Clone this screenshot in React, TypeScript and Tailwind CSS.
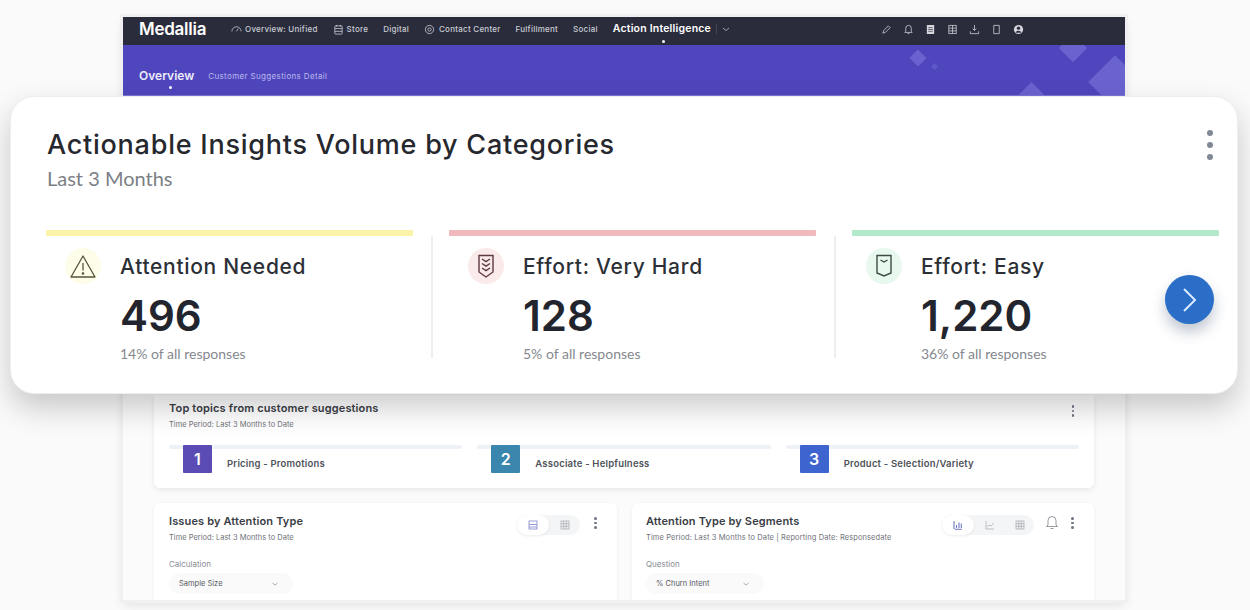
import React from "react";

const headFont = "font-['Inter','Liberation_Sans',sans-serif]";
const bodyFont = "font-['Lato','Open_Sans',sans-serif]";

function Dots({ className = "" }: { className?: string }) {
  return (
    <div className={`flex flex-col items-center gap-[2px] ${className}`}>
      <span className="w-[2.5px] h-[2.5px] rounded-full bg-[#6b7280]" />
      <span className="w-[2.5px] h-[2.5px] rounded-full bg-[#6b7280]" />
      <span className="w-[2.5px] h-[2.5px] rounded-full bg-[#6b7280]" />
    </div>
  );
}

const I = ({ children, size = 11, color = "#c5c8cf" }: { children: React.ReactNode; size?: number; color?: string }) => (
  <svg width={size} height={size} viewBox="0 0 12 12" fill="none" stroke={color} strokeWidth="0.9" className="shrink-0">
    {children}
  </svg>
);

function NavItem({ icon, label, className = "" }: { icon?: React.ReactNode; label: string; className?: string }) {
  return (
    <div className={`flex items-center gap-[3px] text-[8px] tracking-[0.25px] font-medium text-[#c9ccd3] whitespace-nowrap ${className}`}>
      {icon}
      <span>{label}</span>
    </div>
  );
}

function Nav() {
  return (
    <div className="h-[28px] bg-[#2a2c3c] flex items-center pl-[16px] pr-[101px] pb-[4px] shrink-0">
      <div className={`text-[17px] leading-none font-semibold text-white w-[92px] tracking-[-0.25px] ${headFont}`}>Medallia</div>
      <div className={`flex items-center ${headFont}`}>
        <NavItem icon={<I><path d="M1 8a5 5 0 0 1 10 0M6 8l2-3" /></I>} label="Overview: Unified" />
        <NavItem className="ml-[15px]" icon={<I><rect x="2" y="2" width="8" height="9" rx="1" /><path d="M2 5h8M2 8h8M4 1v2M8 1v2" /></I>} label="Store" />
        <NavItem className="ml-[15px] tracking-[0.5px]" label="Digital" />
        <NavItem className="ml-[15px] gap-[4px]" icon={<I><circle cx="6" cy="6" r="4.5" /><circle cx="6" cy="6" r="1.8" /></I>} label="Contact Center" />
        <NavItem className="ml-[15px]" label="Fulfillment" />
        <NavItem className="ml-[15px]" label="Social" />
        <div className="relative ml-[15px] text-[10.5px] font-semibold tracking-[0.2px] text-white whitespace-nowrap">
          Action Intelligence
          <span className="absolute left-1/2 -bottom-[6px] w-[3px] h-[3px] rounded-full bg-white" />
        </div>
        <span className="ml-[5px] w-px h-[10px] bg-[#44475a]" />
        <svg width="8" height="8" viewBox="0 0 8 8" fill="none" stroke="#9ea2ad" className="ml-[5px]"><path d="M1 3l3 2.5L7 3" /></svg>
      </div>
      <div className="ml-auto flex items-center gap-[11px]">
        <I><path d="M2 10l1-3 5-5 2 2-5 5-3 1z" /></I>
        <I><path d="M6 1.5a3 3 0 0 1 3 3V8l1 1.2H2L3 8V4.5a3 3 0 0 1 3-3zM5 10.5h2" /></I>
        <svg width="11" height="11" viewBox="0 0 12 12" fill="#d5d7dc"><rect x="2" y="1" width="8" height="10" rx="0.5" /><path d="M3.5 4h5M3.5 6h5M3.5 8h5" stroke="#2a2c3c" strokeWidth="0.7" /></svg>
        <I><rect x="2" y="1.5" width="8" height="9" /><path d="M2 4.5h8M2 7.5h8M6 1.5v9" /></I>
        <I><path d="M6 1v6M4 5l2 2 2-2M1.5 8v2.5h9V8" /></I>
        <I><path d="M3 1.5h6v9H3z" /></I>
        <svg width="11" height="11" viewBox="0 0 12 12"><circle cx="6" cy="6" r="5" fill="#d5d7dc" /><circle cx="6" cy="4.6" r="1.8" fill="#2a2c3c" /><path d="M2.8 9.5a3.4 3.4 0 0 1 6.4 0" fill="#2a2c3c" /></svg>
      </div>
    </div>
  );
}

function Banner() {
  return (
    <div className="relative h-[51px] bg-[#4f46bd] overflow-hidden shrink-0 border-b border-[#7a74d6]">
      <div className={`flex items-center gap-[14px] pl-[16px] pt-[25px] ${headFont}`}>
        <div className="relative text-[12px] font-semibold text-[#eceaf9] leading-none">
          Overview
          <span className="absolute left-[30px] top-[16px] w-[3px] h-[3px] rounded-full bg-white" />
        </div>
        <div className="text-[8px] tracking-[0.35px] text-[#bcb8ee] leading-none">Customer Suggestions Detail</div>
      </div>
      <span className="absolute left-[789px] top-[7px] w-[12px] h-[12px] rotate-45 bg-[#6a62cf]" />
      <span className="absolute left-[809px] top-[19px] w-[5px] h-[5px] rotate-45 bg-[#5f58c9]" />
      <span className="absolute left-[940px] top-[-7px] w-[20px] h-[20px] rotate-45 bg-[#6a62cf]" />
      <span className="absolute left-[973px] top-[18px] w-[38px] h-[38px] rotate-45 bg-[#6a62cf]" />
      <span className="absolute left-[899px] top-[41px] w-[19px] h-[19px] rotate-45 bg-[#6a62cf]" />
    </div>
  );
}

function Topic({ n, color, label }: { n: string; color: string; label: string }) {
  return (
    <div className="relative h-[28px]">
      <div className="h-[4px] rounded-full bg-[#eef1f7]" />
      <div className="absolute left-[14px] top-0 flex items-center">
        <div className={`w-[29px] h-[28px] flex items-center justify-center text-white font-semibold text-[16px] rounded-[1px] ${color}`}>{n}</div>
        <div className="ml-[15px] mt-[10px] text-[9.5px] font-semibold tracking-[0.2px] text-[#4f5259] whitespace-nowrap">{label}</div>
      </div>
    </div>
  );
}

function Select({ label, value, w }: { label: string; value: string; w: string }) {
  return (
    <div className="mt-[18px]">
      <div className="text-[8px] text-[#8a8d94] leading-none">{label}</div>
      <div className={`mt-[5px] h-[21px] rounded-full bg-[#fafafa] flex items-center justify-between pl-[10px] pr-[14px] ${w}`}>
        <span className="text-[7.5px] text-[#55585f]">{value}</span>
        <svg width="8" height="8" viewBox="0 0 8 8" fill="none" stroke="#a9acb3"><path d="M1.5 3l2.5 2 2.5-2" /></svg>
      </div>
    </div>
  );
}

function Body() {
  return (
    <div className={`flex-1 min-h-0 overflow-hidden bg-[#fbfbfb] px-[31px] pt-[299px] ${headFont}`}>
      <div className="h-[93px] bg-white rounded-b-[6px] shadow-[0_2px_6px_rgba(0,0,0,0.08)] px-[15px] pt-[7px] relative">
        <div className="text-[11px] font-semibold tracking-[0.14px] text-[#3a3d45] leading-[13px]">Top topics from customer suggestions</div>
        <div className="mt-[5px] text-[7.5px] text-[#70737a] leading-[9px]">Time Period: Last 3 Months to Date</div>
        <Dots className="absolute right-[20px] top-[10px]" />
        <div className="grid grid-cols-3 gap-[15px] mt-[16px]">
          <Topic n="1" color="bg-[#5a4bb5]" label="Pricing - Promotions" />
          <Topic n="2" color="bg-[#3a86ad]" label="Associate - Helpfulness" />
          <Topic n="3" color="bg-[#3e64d0]" label="Product - Selection/Variety" />
        </div>
      </div>
      <div className="grid grid-cols-[463px_462px] gap-[15px] mt-[15px]">
        <div className="relative h-[110px] bg-white rounded-[6px] shadow-[0_1px_4px_rgba(0,0,0,0.05)] pl-[15px] pt-[12px]">
          <div className="text-[11px] font-semibold tracking-[0.14px] text-[#3a3d45] leading-[13px]">Issues by Attention Type</div>
          <div className="mt-[5px] text-[7.5px] text-[#70737a] leading-[9px]">Time Period: Last 3 Months to Date</div>
          <Select label="Calculation" value="Sample Size" w="w-[124px]" />
          <div className="absolute left-[363px] top-[12px] flex items-center h-[20px] w-[63px] rounded-full bg-[#f4f5f6]">
            <div className="w-[32px] h-[20px] rounded-full bg-white shadow-[0_1px_3px_rgba(0,0,0,0.08)] flex items-center justify-center">
              <svg width="10" height="10" viewBox="0 0 10 10" fill="none" stroke="#7d86c9" strokeWidth="0.8"><rect x="1" y="1" width="8" height="8" /><path d="M1 4.5h8M1 7h8" /></svg>
            </div>
            <div className="w-[31px] flex justify-center">
              <svg width="10" height="10" viewBox="0 0 10 10" fill="none" stroke="#a4a7ae" strokeWidth="0.7"><rect x="1" y="1" width="8" height="8" /><path d="M1 3.7h8M1 6.3h8M3.7 1v8M6.3 1v8" /></svg>
            </div>
          </div>
          <Dots className="absolute left-[440px] top-[14px]" />
        </div>
        <div className="relative h-[110px] bg-white rounded-[6px] shadow-[0_1px_4px_rgba(0,0,0,0.05)] pl-[14px] pt-[12px]">
          <div className="text-[11px] font-semibold tracking-[0.14px] text-[#3a3d45] leading-[13px]">Attention Type by Segments</div>
          <div className="mt-[5px] text-[7.5px] tracking-[0.1px] text-[#70737a] leading-[9px]">Time Period: Last 3 Months to Date | Reporting Date: Responsedate</div>
          <Select label="Question" value="% Churn Intent" w="w-[118px]" />
          <div className="absolute left-[310px] top-[12px] flex items-center h-[20px] w-[92px] rounded-full bg-[#f4f5f6]">
            <div className="w-[32px] h-[20px] rounded-full bg-white shadow-[0_1px_3px_rgba(0,0,0,0.08)] flex items-center justify-center">
              <svg width="10" height="10" viewBox="0 0 10 10" fill="none" stroke="#6f78c4" strokeWidth="1.1"><path d="M1 9V1M1.8 9.3H9M3.5 8V5M6 8V2.5M8.3 8V3.5" /></svg>
            </div>
            <div className="w-[31px] flex justify-center">
              <svg width="10" height="10" viewBox="0 0 10 10" fill="none" stroke="#a4a7ae" strokeWidth="0.7"><path d="M1 1v8h8M2 7l2-2 2 1 3-3" /></svg>
            </div>
            <div className="w-[29px] flex justify-center">
              <svg width="10" height="10" viewBox="0 0 10 10" fill="none" stroke="#a4a7ae" strokeWidth="0.7"><rect x="1" y="1" width="8" height="8" /><path d="M1 3.7h8M1 6.3h8M3.7 1v8M6.3 1v8" /></svg>
            </div>
          </div>
          <svg width="14" height="15" viewBox="0 0 14 15" fill="none" stroke="#7c8087" strokeWidth="0.8" className="absolute left-[413px] top-[12px]"><path d="M7 1.5a4 4 0 0 1 4 4V10l1.5 1.5h-11L3 10V5.5a4 4 0 0 1 4-4zM5.5 13.5h3" /></svg>
          <Dots className="absolute left-[439px] top-[14px]" />
        </div>
      </div>
    </div>
  );
}

function Stat({ icon, bar, label, value, pct, pad }: { icon: React.ReactNode; bar: string; label: string; value: string; pct: string; pad: string }) {
  return (
    <div>
      <div className={`h-[6px] rounded-[1px] ${bar}`} />
      <div className={`flex mt-[12px] ${pad}`}>
        <div className="w-[55px] shrink-0">{icon}</div>
        <div>
          <div className={`h-[36px] flex items-center text-[21px] font-medium tracking-[0.7px] text-[#2c2f36] leading-none whitespace-nowrap ${headFont}`}>{label}</div>
          <div className={`mt-[10px] text-[42px] font-semibold text-[#22252e] leading-[44px] ${headFont}`}>{value}</div>
          <div className={`mt-[6px] text-[14px] text-[#85888e] leading-[20px] ${bodyFont}`}>{pct}</div>
        </div>
      </div>
    </div>
  );
}

function InsightsCard() {
  return (
    <div className="absolute left-[10px] top-[96px] w-[1228px] h-[298px] bg-white rounded-[24px] border border-[#eceef0] shadow-[0_14px_30px_rgba(0,0,0,0.2)] pl-[35px] pr-[18px] pt-[30px]">
      <div className={`pl-px text-[27px] font-medium tracking-[0.76px] leading-[36px] text-[#26282e] whitespace-nowrap ${headFont}`}>Actionable Insights Volume by Categories</div>
      <div className={`pl-px mt-[1px] text-[20px] text-[#7b7f85] leading-[28px] ${bodyFont}`}>Last 3 Months</div>
      <div className="absolute right-[24px] top-[33px] flex flex-col gap-[6px]">
        <span className="w-[6px] h-[6px] rounded-full bg-[#808894]" />
        <span className="w-[6px] h-[6px] rounded-full bg-[#808894]" />
        <span className="w-[6px] h-[6px] rounded-full bg-[#808894]" />
      </div>
      <div className="grid grid-cols-3 gap-[36px] mt-[38px] relative">
        <Stat
          bar="bg-[#faf3a8]"
          pad="pl-[19px]"
          label="Attention Needed"
          value="496"
          pct="14% of all responses"
          icon={
            <div className="w-[36px] h-[36px] rounded-full bg-[#fdfde9] flex items-center justify-center">
              <svg width="26" height="24" viewBox="0 0 26 24" fill="none" stroke="#56563a" strokeWidth="1.3" strokeLinejoin="round"><path d="M13 2L25 23H1L13 2z" /><path d="M13 9v7.5" /><circle cx="13" cy="19.5" r="0.7" fill="#56563a" /></svg>
            </div>
          }
        />
        <Stat
          bar="bg-[#f1b8bd]"
          pad="pl-[19px]"
          label="Effort: Very Hard"
          value="128"
          pct="5% of all responses"
          icon={
            <div className="w-[36px] h-[36px] rounded-full bg-[#fbeaea] flex items-center justify-center">
              <svg width="16" height="24" viewBox="0 0 16 24" fill="none" stroke="#5b3a42" strokeWidth="1.4"><path d="M1 1.5h14V18l-7 5-7-5V1.5z" /><path d="M4 5l4 2.6L12 5M4 9.5l4 2.6 4-2.6M4 14l4 2.6 4-2.6" /></svg>
            </div>
          }
        />
        <Stat
          bar="bg-[#b2e9cb]"
          pad="pl-[14px]"
          label="Effort: Easy"
          value="1,220"
          pct="36% of all responses"
          icon={
            <div className="w-[36px] h-[36px] rounded-full bg-[#e9f8ef] flex items-center justify-center">
              <svg width="16" height="24" viewBox="0 0 16 24" fill="none" stroke="#3d4a44" strokeWidth="1.4"><path d="M1 1.5h14V19l-7 3-7-3V1.5z" /><path d="M4.5 6l3.5 2 3.5-2" /></svg>
            </div>
          }
        />
        <span className="absolute left-[385px] top-[6px] w-[2px] h-[122px] bg-[#eceef0]" />
        <span className="absolute left-[788px] top-[6px] w-[2px] h-[122px] bg-[#eceef0]" />
      </div>
      <button className="absolute left-[1154px] top-[178px] w-[49px] h-[49px] rounded-full bg-[#2a6ec8] shadow-[0_8px_14px_rgba(30,50,90,0.28)] flex items-center justify-center">
        <svg width="18" height="28" viewBox="0 0 18 28" fill="none" stroke="#dbeafe" strokeWidth="2"><path d="M3 3l11 11L3 25" /></svg>
      </button>
    </div>
  );
}

export default function App() {
  return (
    <div className="relative w-[1250px] h-[610px] bg-[#fafafa] overflow-hidden">
      <div className="pl-[123px] pt-[17px]">
        <div className="w-[1002px] h-[583px] flex flex-col bg-white shadow-[0_5px_10px_rgba(0,0,0,0.1)] outline outline-[3px] outline-[#f0f0f2]">
          <Nav />
          <Banner />
          <Body />
        </div>
      </div>
      <InsightsCard />
    </div>
  );
}
